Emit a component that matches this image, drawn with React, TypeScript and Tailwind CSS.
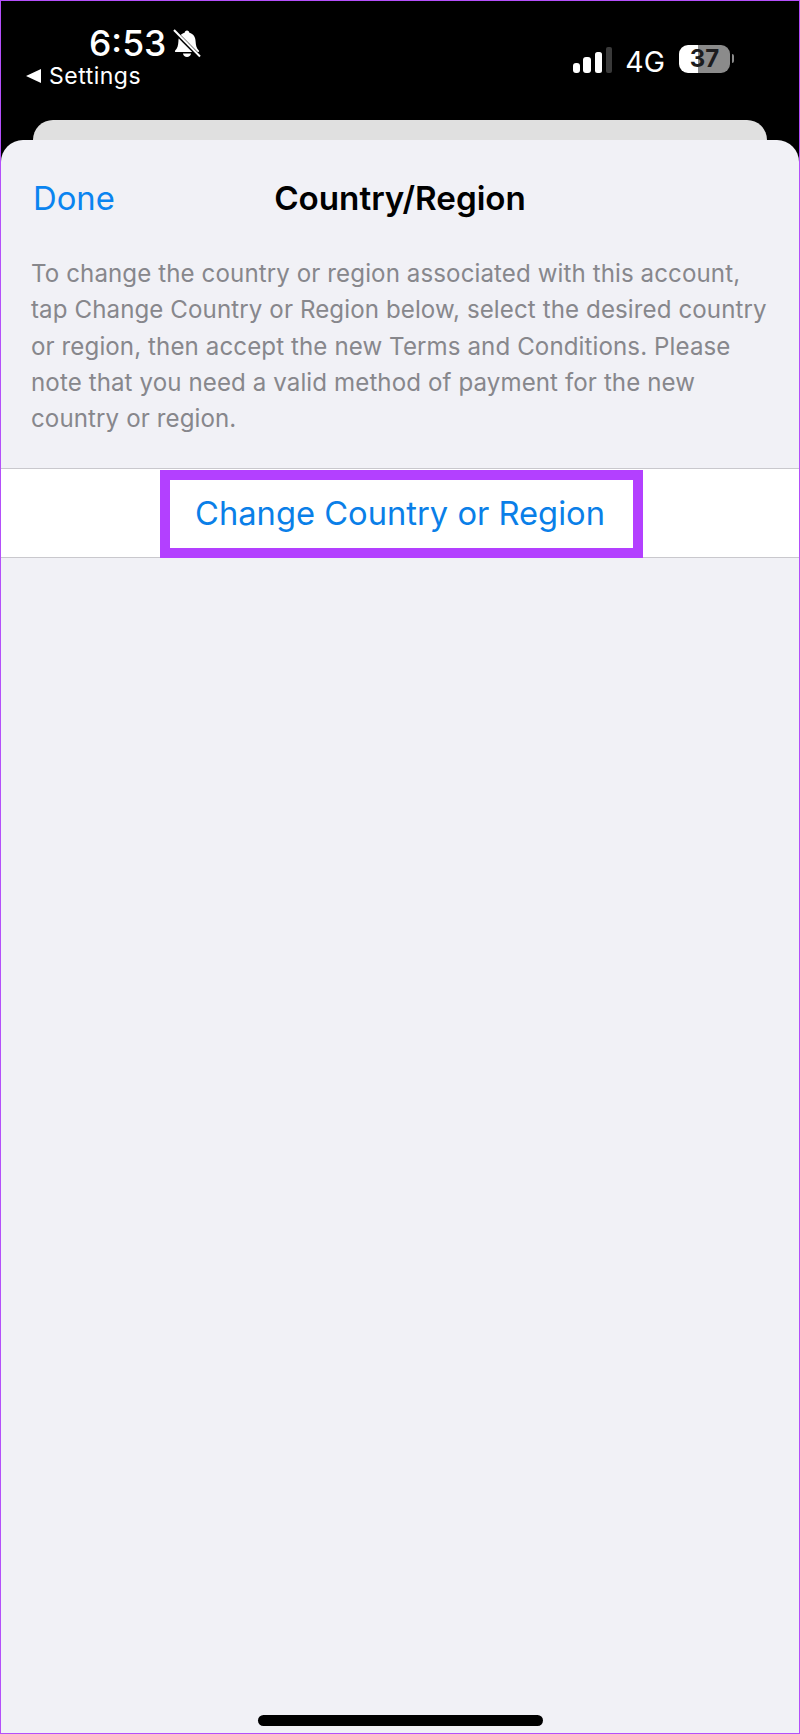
export default function App() {
  const font = { fontFamily: "Inter, 'Noto Sans', sans-serif" };
  return (
    <div style={font} className="w-[800px] h-[1734px] flex flex-col border border-[#b44ffa] bg-[#f1f1f6] overflow-hidden">
      <div className="h-[119px] bg-black flex justify-between text-white">
        <div className="pl-[25px] pt-[23px] flex flex-col">
          <div className="flex items-center pl-[63px] h-[39px]">
            <span className="text-[35.500px] leading-[39px] font-medium">6:53</span>
            <svg width="28" height="29" viewBox="0 0 28 29" className="ml-[7px]" fill="white">
              <path d="M14 1.5c1.4 0 2.3 1 2.4 2.3 4 1 6 4.2 6.2 8.6.2 4.2 1 6.600 3.200 9 .6.8.2 1.600-.8 1.600H3c-1 0-1.400-.8-.8-1.600 2.200-2.400 3-4.800 3.200-9 .2-4.400 2.200-7.600 6.200-8.600.1-1.300 1-2.300 2.400-2.300z" />
              <path d="M10 24.500h8c-.3 2-1.900 3.500-4 3.500s-3.700-1.500-4-3.500z" />
              <path d="M0 1 L27 28" stroke="black" strokeWidth="4" />
              <path d="M1 1 L27 27.500" stroke="white" strokeWidth="2" />
            </svg>
          </div>
          <div className="flex items-center h-[26px]">
            <svg width="15" height="14" viewBox="0 0 15 14" fill="white"><path d="M15 0v14L0 7z" /></svg>
            <span className="ml-[8px] text-[23px] leading-[26px] tracking-[0.5px]">Settings</span>
          </div>
        </div>
        <div className="flex items-start pt-[44px] pr-[69px]">
          <svg width="39" height="26" viewBox="0 0 39 26" className="mt-[2px]">
            <rect x="0" y="16" width="7" height="10" rx="3" fill="white" />
            <rect x="10" y="10" width="8" height="16" rx="3" fill="white" />
            <rect x="22" y="5" width="7" height="21" rx="2.500" fill="white" />
            <rect x="33" y="0" width="6" height="26" rx="2" fill="#3a3a3a" />
          </svg>
          <span className="ml-[13px] text-[28.500px] leading-[33px] font-normal">4G</span>
          <div className="relative ml-[14px] w-[51px] h-[28px] rounded-[9px] bg-[linear-gradient(90deg,#ffffff_37%,#8b8b8b_37%)] flex items-center justify-center">
            <span className="text-[24px] leading-[28px] font-bold text-[#1c1c1e]">37</span>
            <span className="absolute left-[53px] top-[9px] w-[2px] h-[9px] rounded-r-full bg-[#8b8b8b]" />
          </div>
        </div>
      </div>
      <div className="h-[20px] bg-black">
        <div className="ml-[32px] mr-[32px] h-[20px] bg-[#e0e0e0] rounded-t-[20px]" />
      </div>
      <div className="relative flex-1 flex flex-col bg-black">
        <div className="flex-1 flex flex-col bg-[#f1f1f6] rounded-t-[22px]">
          <div className="h-[116px] flex items-center relative">
            <span className="ml-[32px] text-[32.800px] leading-[40px] text-[#0a84f0]">Done</span>
            <span className="absolute left-0 right-0 text-center text-[33.200px] leading-[40px] font-semibold text-black">Country/Region</span>
          </div>
          <p className="mx-[30px] text-[24.100px] leading-[36.250px] text-[#87878c] tracking-[0.1px] whitespace-nowrap">
            To change the country or region associated with this account,<br />
            tap Change Country or Region below, select the desired country<br />
            or region, then accept the new Terms and Conditions. Please<br />
            note that you need a valid method of payment for the new<br />
            country or region.
          </p>
          <div className="mt-[31px] h-[90px] bg-white border-y border-[#c9c8cd] flex justify-center">
            <div className="mt-[1px] ml-[2px] w-[483px] h-[88px] shrink-0 border-[10px] border-[#b340ff] flex items-center justify-center">
              <span className="mb-[2px] mr-[2px] text-[32.700px] leading-[42px] text-[#0a7fe8] whitespace-nowrap">Change Country or Region</span>
            </div>
          </div>
          <div className="flex-1 flex flex-col justify-end items-center pb-[7px]">
            <div className="w-[285px] h-[11px] rounded-full bg-black" />
          </div>
        </div>
      </div>
    </div>
  );
}
